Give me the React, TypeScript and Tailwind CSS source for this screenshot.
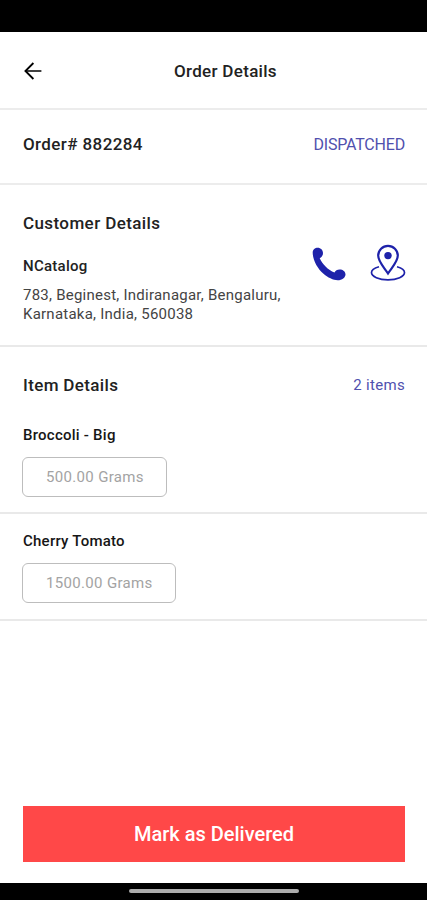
import clsx from "clsx";

type Item = {
  name: string;
  quantity: string;
};

const items: Item[] = [
  { name: "Broccoli - Big", quantity: "500.00 Grams" },
  { name: "Cherry Tomato", quantity: "1500.00 Grams" },
];

const BackIcon = () => (
  <svg
    className="h-[18px] w-[18px]"
    viewBox="0 0 18 18"
    fill="none"
    stroke="currentColor"
    strokeWidth={1.8}
  >
    <path d="M9.4 1 1.4 9l8 8" />
    <path d="M1.6 9H17.4" strokeWidth={1.5} />
  </svg>
);

const PhoneIcon = () => (
  <svg className="h-[34px] w-[34px]" viewBox="0 0 34 34" fill="currentColor">
    <path d="M.7 5.500C.7 2.500 3 .7 5.700.7c3 0 5.300 2.300 5.300 5.200 0 2.400-1.200 4.300-3.300 5.300 2.400 5.600 8.400 11.800 14.800 14.400 .9-2.100 2.700-3.200 5.100-3.200 3.300 0 5.900 2.100 5.900 4.900 0 3.400-3.400 6-7.800 6-4.400 0-9.900-2.700-14.500-6.700C5.800 21.800.7 13.300.7 5.500Z" />
  </svg>
);

const LocationIcon = () => (
  <svg
    className="h-[38px] w-[36px]"
    viewBox="0 0 36 38"
    fill="none"
    stroke="currentColor"
    strokeWidth={2.2}
  >
    <path d="M18 29.500C14.500 23.800 8.200 18 8.200 11.600a9.800 9.800 0 0 1 19.600 0c0 6.400-6.300 12.200-9.800 17.900Z" />
    <circle cx="18" cy="11.600" r="3.700" fill="currentColor" stroke="none" />
    <path
      d="M9 22.800C4.500 24 1.500 26.200 1.500 28.600c0 4 7.400 7.200 16.500 7.200s16.500-3.200 16.500-7.200c0-2.400-3-4.600-7.500-5.800"
      strokeWidth={1.7}
    />
  </svg>
);

const ItemRow = ({ name, quantity }: Item) => (
  <>
    <h3 className="text-[15px] leading-5 font-medium tracking-[0.24px] text-[#161616]">
      {name}
    </h3>
    <div className="mt-[12px] -ml-px flex h-10 w-fit items-center rounded-[6px] border border-[#bdbdbd] pr-[22px] pl-[23px] text-[15px] tracking-[0.33px] text-[#a3a3a3]">
      {quantity}
    </div>
  </>
);

export default function App() {
  return (
    <div className="flex h-[900px] w-[427px] flex-col overflow-hidden bg-white font-['Roboto',sans-serif] whitespace-nowrap text-[#222]">
      <div className="h-8 shrink-0 bg-black" />

      <header className="grid h-[78px] shrink-0 grid-cols-[1fr_auto_1fr] items-center border-b-2 border-[#ececec] pt-px pl-6">
        <button type="button" className="w-fit text-black">
          <BackIcon />
        </button>
        <h1 className="pt-0.5 text-[17px] font-medium tracking-[0.3px]">
          Order Details
        </h1>
      </header>

      <section className="flex h-[75px] shrink-0 items-center justify-between border-b-2 border-[#ececec] pr-[22px] pb-[4px] pl-[23px]">
        <h2 className="text-[17px] font-medium tracking-[0.4px]">
          Order# 882284
        </h2>
        <span className="text-base tracking-[-0.2px] text-[#5050ae]">
          DISPATCHED
        </span>
      </section>

      <section className="flex h-[162px] shrink-0 justify-between border-b-2 border-[#e9e9e9] pt-[26px] pr-[21px] pl-[23px]">
        <div>
          <h2 className="text-[17px] leading-6 font-medium tracking-[0.4px]">
            Customer Details
          </h2>
          <h3 className="mt-[21px] text-[15px] leading-5 font-medium tracking-[0.27px]">
            NCatalog
          </h3>
          <p className="mt-[10px] text-[15px] leading-[18.5px] tracking-[0.24px] text-[#444]">
            783, Beginest, Indiranagar, Bengaluru,
            <br />
            Karnataka, India, 560038
          </p>
        </div>
        <div className="mt-[33px] flex items-start gap-[24px] text-[#1e22aa]">
          <button type="button" className="mt-[3px]">
            <PhoneIcon />
          </button>
          <button type="button">
            <LocationIcon />
          </button>
        </div>
      </section>

      <section className="shrink-0">
        <div className="flex h-[68px] items-start justify-between pt-[26px] pr-[22px] pl-[23px] leading-6">
          <h2 className="text-[17px] font-medium tracking-[0.35px]">
            Item Details
          </h2>
          <span className="text-[15px] tracking-[0.3px] text-[#5050ae]">
            2 items
          </span>
        </div>
        {items.map((item, i) => (
          <div
            key={item.name}
            className={clsx(
              "border-b-2 border-[#e9e9e9] px-[23px]",
              i === 0 ? "h-[99px] pt-[10px]" : "h-[107px] pt-[17px]"
            )}
          >
            <ItemRow {...item} />
          </div>
        ))}
      </section>

      <div className="mt-auto pr-[22px] pb-[21px] pl-[23px]">
        <button
          type="button"
          className="h-14 w-full bg-[#ff4848] text-[20px] font-medium text-white"
        >
          Mark as Delivered
        </button>
      </div>
      <div className="flex h-[17px] shrink-0 justify-center bg-black pt-[6px]">
        <div className="h-1 w-[170px] rounded-full bg-[#acacac]" />
      </div>
    </div>
  );
}
